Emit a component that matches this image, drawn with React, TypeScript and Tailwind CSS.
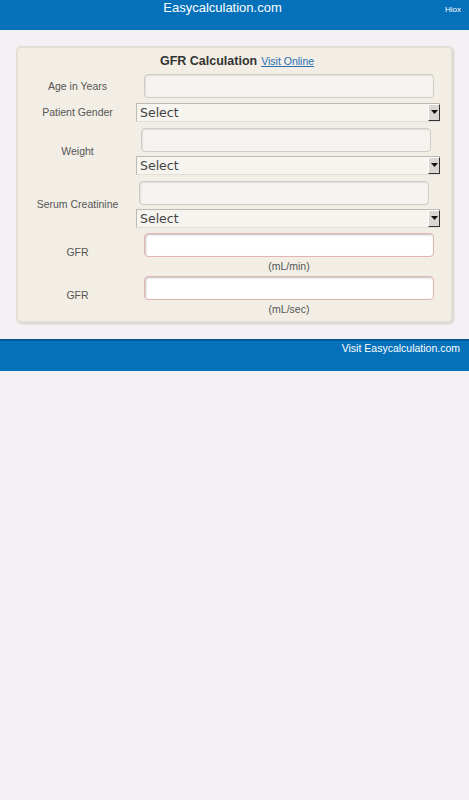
import React from 'react';

const label = "text-[10.5px] text-[#555] text-center leading-none";

function TextBox({ ml, w, red }: { ml: number; w: number; red?: boolean }) {
  return (
    <div
      className={
        red
          ? "h-[24px] rounded-[4px] border border-[#e2b4b4] bg-white shadow-[inset_1px_1px_2px_rgba(0,0,0,0.25)]"
          : "h-[24px] rounded-[4px] border border-[#cfccc6] bg-[#f5f3ef] shadow-[inset_1px_1px_1px_rgba(0,0,0,0.08)]"
      }
      style={{ marginLeft: ml, width: w }}
    />
  );
}

function SelectBox() {
  return (
    <div className="flex h-[19px] w-[304px] items-stretch border-t border-l border-[#bdbab3] border-b border-b-[#e2dfd8] bg-[#f6f4ef]">
      <span className="flex-1 pl-[3px] text-[12.5px] leading-[17px] text-[#444] font-['DejaVu_Sans',sans-serif]">Select</span>
      <span className="flex w-[12px] items-center justify-center border-l border-t border-white border-r border-r-[#333] border-b border-b-[#333] bg-[#dad7d2]">
        <svg width="7" height="4" viewBox="0 0 7 4"><path d="M0 0h7L3.5 4z" fill="#111" /></svg>
      </span>
    </div>
  );
}

export default function App() {
  return (
    <div className="min-h-[800px] bg-[#f3f1f3] font-['Liberation_Sans',Arial,sans-serif]">
      <header className="relative flex h-[30px] justify-center bg-[#0471ba]">
        <span className="mr-[24px] text-[13px] leading-[15px] text-white">Easycalculation.com</span>
        <span className="absolute right-[8px] top-[4px] text-[8px] text-white">Hiox</span>
      </header>

      <div className="px-[16px] pt-[16px] pb-[16px]">
        <div className="rounded-[5px] border-2 border-[#e3dfd5] bg-[#f2eee5] pb-[4px] shadow-[1px_1px_2px_rgba(0,0,0,0.15)]">
          <div className="flex items-baseline justify-center pt-[4px] pl-[5px]">
            <span className="text-[12.5px] font-bold text-[#333]">GFR Calculation</span>
            <a className="ml-[4px] text-[10.5px] text-[#2a6fb3] underline">Visit Online</a>
          </div>

          <div className="mt-[2px] flex flex-col">
            <div className="flex h-[27px] items-center">
              <div className={`w-[119px] ${label}`}>Age in Years</div>
              <TextBox ml={7} w={290} />
            </div>
            <div className="flex h-[25px] items-center">
              <div className={`w-[119px] ${label}`}>Patient Gender</div>
              <div className="-ml-[1px]"><SelectBox /></div>
            </div>
            <div className="flex h-[53px] items-center">
              <div className={`w-[119px] ${label}`}>Weight</div>
              <div className="-ml-[1px] flex flex-col gap-[4px]">
                <TextBox ml={5} w={290} />
                <SelectBox />
              </div>
            </div>
            <div className="flex h-[53px] items-center">
              <div className={`w-[119px] ${label}`}>Serum Creatinine</div>
              <div className="-ml-[1px] flex flex-col gap-[4px]">
                <TextBox ml={3} w={290} />
                <SelectBox />
              </div>
            </div>
            <div className="flex h-[43px] items-center">
              <div className={`w-[119px] ${label}`}>GFR</div>
              <div className="flex flex-col">
                <TextBox ml={7} w={290} red />
                <div className="ml-[7px] mt-[4px] w-[290px] text-center text-[10.5px] leading-none text-[#555]">(mL/min)</div>
              </div>
            </div>
            <div className="flex h-[43px] items-center">
              <div className={`w-[119px] ${label}`}>GFR</div>
              <div className="flex flex-col">
                <TextBox ml={7} w={290} red />
                <div className="ml-[7px] mt-[4px] w-[290px] text-center text-[10.5px] leading-none text-[#555]">(mL/sec)</div>
              </div>
            </div>
          </div>
        </div>
      </div>

      <footer className="flex h-[32px] justify-end border-t-2 border-[#035a96] bg-[#0471ba] pr-[9px]">
        <span className="text-[10.5px] text-white">Visit Easycalculation.com</span>
      </footer>
    </div>
  );
}
